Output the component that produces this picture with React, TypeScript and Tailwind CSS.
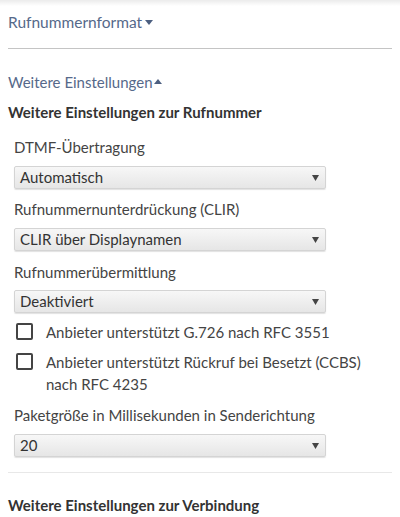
import React from "react";

const font = { fontFamily: "Lato, 'Open Sans', sans-serif" };

function Select({ value }: { value: string }) {
  return (
    <div className="mx-[14px] w-[312px] h-[23px] flex items-center justify-between pl-[5px] pr-[6px] border border-[#d4d4d4] rounded-[2px] bg-gradient-to-b from-[#f7f7f7] to-[#e6e6e6] shadow-[0_1px_1px_rgba(0,0,0,0.12)] text-[15px] text-[#333]">
      <span className="leading-none">{value}</span>
      <svg width="7" height="6" viewBox="0 0 7 6" className="mt-[1px]">
        <path d="M0 0 H7 L3.5 6 Z" fill="#444" />
      </svg>
    </div>
  );
}

function Label({ children }: { children: React.ReactNode }) {
  return <div className="px-[14px] text-[15px] text-[#444] leading-[20px]">{children}</div>;
}

function Check({ children }: { children: React.ReactNode }) {
  return (
    <div className="flex items-start px-[16px]">
      <div className="w-[17px] h-[17px] mt-[2px] border-2 border-[#444] rounded-[2px] shrink-0" />
      <div className="ml-[13px] text-[15px] text-[#444] leading-[22px]">{children}</div>
    </div>
  );
}

export default function App() {
  return (
    <div className="w-[400px] h-[517px] bg-white overflow-hidden relative" style={font}>
      <div className="absolute top-0 left-0 right-0 h-[6px] bg-gradient-to-b from-[rgba(0,0,0,0.08)] to-transparent" />
      <div className="px-[8px] pt-[12px]">
        <div className="flex items-center text-[15.5px] text-[#56698a] leading-[20px]">
          Rufnummernformat
          <svg width="8" height="6" viewBox="0 0 8 6" className="ml-[3px] mt-[1px]">
            <path d="M0 0 H8 L4 5 Z" fill="#4c5f80" />
          </svg>
        </div>
        <div className="mt-[16px] h-px bg-[#c4c4c4]" />
        <div className="mt-[23px] flex items-center text-[15px] text-[#56698a] leading-[20px]">
          Weitere Einstellungen
          <svg width="8" height="6" viewBox="0 0 8 6" className="ml-[1px] -mt-[1px]">
            <path d="M0 5 H8 L4 0 Z" fill="#4c5f80" />
          </svg>
        </div>
        <div className="mt-[10px] text-[15px] font-bold text-[#333] leading-[20px]">
          Weitere Einstellungen zur Rufnummer
        </div>
      </div>
      <div className="mt-[15px] flex flex-col">
        <Label>DTMF-Übertragung</Label>
        <div className="mt-[9px]"><Select value="Automatisch" /></div>
        <div className="mt-[10px]"><Label>Rufnummernunterdrückung (CLIR)</Label></div>
        <div className="mt-[9px]"><Select value="CLIR über Displaynamen" /></div>
        <div className="mt-[11px]"><Label>Rufnummerübermittlung</Label></div>
        <div className="mt-[8px]"><Select value="Deaktiviert" /></div>
        <div className="mt-[8px]"><Check>Anbieter unterstützt G.726 nach RFC 3551</Check></div>
        <div className="mt-[8px]"><Check>Anbieter unterstützt Rückruf bei Besetzt (CCBS) nach RFC 4235</Check></div>
        <div className="mt-[10px]"><Label>Paketgröße in Millisekunden in Senderichtung</Label></div>
        <div className="mt-[9px]"><Select value="20" /></div>
      </div>
      <div className="mx-[8px] mt-[15px] h-px bg-[#e8e8e8]" />
      <div className="px-[8px] mt-[22px] text-[15px] font-bold text-[#333] leading-[20px]">
        Weitere Einstellungen zur Verbindung
      </div>
    </div>
  );
}
